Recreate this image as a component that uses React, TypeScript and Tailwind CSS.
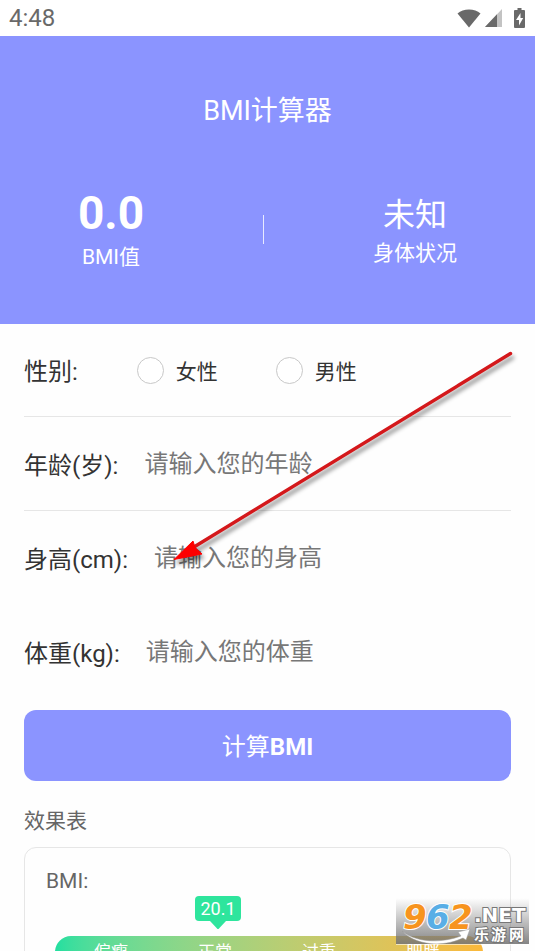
import React, { useState } from 'react';

const levels = ['偏瘦', '正常', '过重', '肥胖'];

const StatusBar: React.FC = () => (
  <div className="flex h-9 items-center justify-between bg-white pl-[9px] pr-2.5 text-[#696969]">
    <span className="text-[24px] leading-9">4:48</span>
    <div className="flex items-center">
      <svg className="h-[19px] w-6" viewBox="0 0 24 19" fill="currentColor">
        <path d="M12 18.5 0.5 4.6C3.5 2 7.4 0.5 12 0.5s8.500 1.500 11.500 4.100z" />
      </svg>
      <svg className="ml-1 h-[18px] w-[17px]" viewBox="0 0 17 18" fill="currentColor">
        <path d="M17 0v18H0z" opacity="0.4" />
        <path d="M12 5.300V18H0z" />
      </svg>
      <svg className="ml-3 h-5 w-[11px]" viewBox="0 0 11 20">
        <path d="M3.500 0h4v2H10q1 0 1 1v16q0 1-1 1H1q-1 0-1-1V3q0-1 1-1h2.500z" fill="currentColor" />
        <path d="M6.500 5 2 12h3v5.500L9.200 10H6.500z" fill="#fff" />
      </svg>
    </div>
  </div>
);

interface FieldProps {
  id: string;
  label: string;
  placeholder: string;
  value: string;
  onChange: (value: string) => void;
  divider?: boolean;
}

const Field: React.FC<FieldProps> = ({ id, label, placeholder, value, onChange, divider }) => (
  <div className={divider ? 'flex h-[94px] items-center border-b border-[#e6e6e6] pt-1' : 'flex h-[94px] items-center pt-1'}>
    <label htmlFor={id} className="shrink-0 text-[24px] leading-9">{label}</label>
    <input
      id={id}
      type="text"
      inputMode="numeric"
      placeholder={placeholder}
      className="mb-1 ml-[26px] h-9 min-w-0 flex-1 bg-transparent text-[24px] leading-9 outline-none placeholder:text-[#777]"
      value={value}
      onChange={e => onChange(e.target.value)}
    />
  </div>
);

const Arrow: React.FC = () => (
  <svg
    className="pointer-events-none absolute left-[168px] top-6 h-[226px] w-[355px] drop-shadow-[2px_4px_2px_rgba(0,0,0,0.45)]"
    viewBox="168 348 355 226"
  >
    <path d="M510.500 353.500 194 547" stroke="#d4181b" strokeWidth="3.400" strokeLinecap="round" />
    <path d="M174 559.500 193 541 195 547.500 202 554z" fill="#fe0000" stroke="#fe0000" strokeWidth="1" />
  </svg>
);

const Watermark: React.FC = () => (
  <div className="absolute bottom-1.5 right-1.5 border-b border-white/60 bg-linear-to-b from-white/0 to-[#777]/90">
    <svg className="block h-[46px] w-[133px]" viewBox="0 0 133 46">
      <g
        fontFamily="'DejaVu Sans', sans-serif"
        fontWeight="bold"
        fontStyle="italic"
        fontSize="34"
        stroke="#fff"
        strokeWidth="2"
        paintOrder="stroke"
      >
        <text x="7" y="31" fill="#f7941e">9</text>
        <text x="30" y="31" fill="#58aee6">6</text>
        <text x="53" y="31" fill="#f7941e">2</text>
      </g>
      <g fill="#fff" stroke="#777" strokeWidth="2" paintOrder="stroke" fontWeight="bold">
        <text x="78" y="24" fontFamily="'DejaVu Sans', sans-serif" fontSize="20">.NET</text>
        <g fontFamily="'Noto Sans CJK SC', sans-serif" fontSize="15">
          <text x="78" y="42">乐</text>
          <text x="95" y="42">游</text>
          <text x="113" y="42">网</text>
        </g>
      </g>
      <path
        d="M6 33C19 44 43 46 65 38L62 34 74 31 70 42 67 40C46 50 19 47 6 33z"
        fill="#fff"
        stroke="#999"
        strokeWidth="0.5"
      />
    </svg>
  </div>
);

export default function App() {
  const [gender, setGender] = useState('');
  const [age, setAge] = useState('');
  const [height, setHeight] = useState('');
  const [weight, setWeight] = useState('');
  const [bmi, setBmi] = useState(0);

  const calculate = (e: React.FormEvent) => {
    e.preventDefault();
    const meters = Number(height) / 100;
    if (meters > 0 && Number(weight) > 0) setBmi(Number(weight) / (meters * meters));
  };

  const status = bmi === 0 ? '未知' : bmi < 18.5 ? levels[0] : bmi < 24 ? levels[1] : bmi < 28 ? levels[2] : levels[3];

  return (
    <div className="relative h-screen overflow-hidden bg-[#fefefe] font-[Roboto,'Noto_Sans_CJK_SC',sans-serif] text-[#333]">
      <StatusBar />

      <header className="h-72 bg-[#8b94ff] pt-[57px] text-white">
        <h1 className="text-center text-[27px] leading-9">BMI计算器</h1>
        <div className="mt-[58px] flex items-center justify-between pl-[69px] pr-[78px] text-center">
          <div className="w-[84px]">
            <p className="text-[46px] font-bold leading-[52px]">{bmi.toFixed(1)}</p>
            <p className="pt-1 text-[21px] leading-7">BMI值</p>
          </div>
          <div className="h-[29px] w-px bg-white/80" />
          <div className="w-[84px]">
            <p className="pt-1 text-[32px] leading-[48px]">{status}</p>
            <p className="whitespace-nowrap pb-1 text-[21px] leading-7">身体状况</p>
          </div>
        </div>
      </header>

      <main className="relative px-6">
        <form onSubmit={calculate}>
          <div className="flex h-[93px] items-center border-b border-[#e6e6e6]" role="radiogroup" aria-label="性别">
            <span className="pt-1 text-[24px] leading-9">性别:</span>
            <div className="ml-[59px] flex gap-[58px]">
              {['女性', '男性'].map(g => (
                <label key={g} className="flex items-center gap-3 text-[21px] leading-8">
                  <input
                    type="radio"
                    name="gender"
                    value={g}
                    className="size-[27px] appearance-none rounded-full border border-[#c8c8c8] bg-white checked:border-8 checked:border-[#8b94ff]"
                    checked={gender === g}
                    onChange={() => setGender(g)}
                  />
                  <span className="pt-1">{g}</span>
                </label>
              ))}
            </div>
          </div>
          <Field id="age" label="年龄(岁):" placeholder="请输入您的年龄" value={age} onChange={setAge} divider />
          <Field id="height" label="身高(cm):" placeholder="请输入您的身高" value={height} onChange={setHeight} />
          <Field id="weight" label="体重(kg):" placeholder="请输入您的体重" value={weight} onChange={setWeight} />
          <button type="submit" className="mt-[11px] h-[71px] w-full rounded-xl bg-[#8b94ff] pt-0.5 text-[24px] leading-9 text-white">
            计算<b>BMI</b>
          </button>
        </form>

        <h2 className="mt-6 text-[21px] leading-8 text-[#666]">效果表</h2>
        <section className="mt-2.5 rounded-xl border border-[#e6e6e6] px-[21px] pb-8 pt-[17px] text-[#666]">
          <p className="text-[21px] leading-8">BMI:</p>
          <div className="-mt-px ml-[149px] flex w-[46px] flex-col items-center">
            <span className="h-[25px] w-full rounded bg-[#2ee59d] text-center text-[18px] leading-[26px] text-white">20.1</span>
            <svg className="h-2 w-4" viewBox="0 0 16 8" fill="#2ee59d">
              <path d="M0 0h16L9 7.500q-1 1-2 0z" />
            </svg>
          </div>
          <div className="ml-[9px] mr-[6px] mt-[7px] grid h-8 grid-cols-4 rounded-full bg-linear-to-r from-[#20dfa0] to-[#fbb83a] pl-1 pr-2 text-center text-[17px] leading-8 text-white">
            {levels.map(level => (
              <span key={level}>{level}</span>
            ))}
          </div>
        </section>
        <Arrow />
      </main>

      <Watermark />
    </div>
  );
}
